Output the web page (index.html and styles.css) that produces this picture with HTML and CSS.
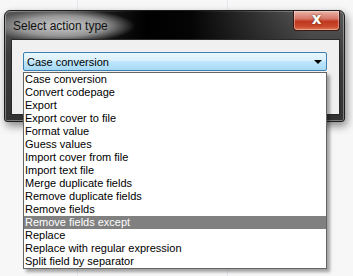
FILE: index.html
```html
<!DOCTYPE html>
<html lang="en">
<head>
<meta charset="UTF-8">
<meta name="viewport" content="width=device-width, initial-scale=1.0">
<title>Select action type</title>
<link rel="stylesheet" href="styles.css">
</head>
<body>
<div class="window">
    <div class="titlebar">
        <span class="title">Select action type</span>
        <button class="close">x</button>
    </div>
    <div class="client">
        <div class="combo">
            <div class="combo-box">
                <span>Case conversion</span>
                <span class="arrow"></span>
            </div>
            <!-- open dropdown list, lies over the window -->
            <ul class="list">
                <li>Case conversion</li>
                <li>Convert codepage</li>
                <li>Export</li>
                <li>Export cover to file</li>
                <li>Format value</li>
                <li>Guess values</li>
                <li>Import cover from file</li>
                <li>Import text file</li>
                <li>Merge duplicate fields</li>
                <li>Remove duplicate fields</li>
                <li>Remove fields</li>
                <li class="selected">Remove fields except</li>
                <li>Replace</li>
                <li>Replace with regular expression</li>
                <li>Split field by separator</li>
            </ul>
        </div>
    </div>
</div>
</body>
</html>
```

FILE: styles.css
```css
body {
    margin: 0;
    height: 276px;
    font-family: "Liberation Sans", Arial, sans-serif;
    background-color: #f7f7f7;
    background-image:
        linear-gradient(90deg, transparent 77px, #e4e8ee 77px, #e4e8ee 78px, transparent 78px),
        linear-gradient(90deg, transparent 227px, #e4e8ee 227px, #e4e8ee 228px, transparent 228px);
    overflow: hidden;
}

/* ---------- window frame ---------- */
.window {
    margin: 10px 0 0 4px;
    width: 339px;
    height: 110px;
    border: 1px solid #1e1e1e;
    border-radius: 6px 6px 3px 3px;
    background: linear-gradient(180deg, #5a5a5a 0%, #3c3c3c 40%, #333 100%);
    box-shadow: inset 0 0 0 1px rgba(255, 255, 255, .35), 2px 4px 8px rgba(0, 0, 0, .45);
}

.titlebar {
    display: flex;
    justify-content: space-between;
    height: 28px;
    padding-left: 8px;
    background:
        radial-gradient(ellipse 72px 17px at 58px 15px, rgba(205, 205, 205, 1), rgba(175, 175, 175, .8) 60%, rgba(0, 0, 0, 0) 100%),
        linear-gradient(90deg, rgba(0, 0, 0, 0) 0%, #000 42%, #050505 55%, rgba(0, 0, 0, 0) 90%);
    border-radius: 6px 6px 0 0;
}

.title {
    padding-top: 8px;
    font-size: 12px;
    color: #111;
}

.close {
    width: 47px;
    height: 20px;
    margin-right: 4px;
    padding: 0 0 3px;
    border: 1px solid #3a1a12;
    border-top: none;
    border-radius: 0 0 4px 4px;
    background: linear-gradient(180deg, #e9b4a6 0%, #d6786a 40%, #c0381f 55%, #c8472c 80%, #e07a52 100%);
    box-shadow: inset 0 0 0 1px rgba(255, 255, 255, .35);
    font-family: "DejaVu Sans", sans-serif;
    font-weight: bold;
    font-size: 15px;
    line-height: 15px;
    color: #fff;
    text-shadow: 0 0 2px #5a1a0a;
}

/* ---------- client area ---------- */
.client {
    margin: 0 4px 0 6px;
    padding: 12px 0 0 11px;
    box-sizing: border-box;
    height: 76px;
    background: #f0f0f0;
    border: 1px solid #2a2a2a;
}

.combo {
    position: relative;
    width: 304px;
}

.combo-box {
    display: flex;
    justify-content: space-between;
    align-items: center;
    height: 17px;
    padding: 0 4px 0 3px;
    border: 1px solid #3c7fb1;
    border-radius: 2px;
    background: linear-gradient(180deg, #eaf6fd 0%, #d9f0fc 45%, #bee6fd 50%, #a7d9f5 100%);
    font-size: 11px;
    color: #000;
}

.arrow {
    width: 0;
    height: 0;
    border-left: 4px solid transparent;
    border-right: 4px solid transparent;
    border-top: 4px solid #000;
}

/* ---------- dropdown list ---------- */
.list {
    position: absolute;
    left: 0;
    top: 20px;
    width: 302px;
    margin: 0;
    padding: 0;
    list-style: none;
    background: #fff;
    border: 1px solid #646464;
    box-shadow: 3px 3px 3px rgba(0, 0, 0, .35);
}

.list li {
    height: 13px;
    line-height: 13px;
    padding-left: 1px;
    font-size: 11px;
    color: #000;
    white-space: nowrap;
}

.list li.selected {
    background: #808080;
    color: #fff;
}
```
